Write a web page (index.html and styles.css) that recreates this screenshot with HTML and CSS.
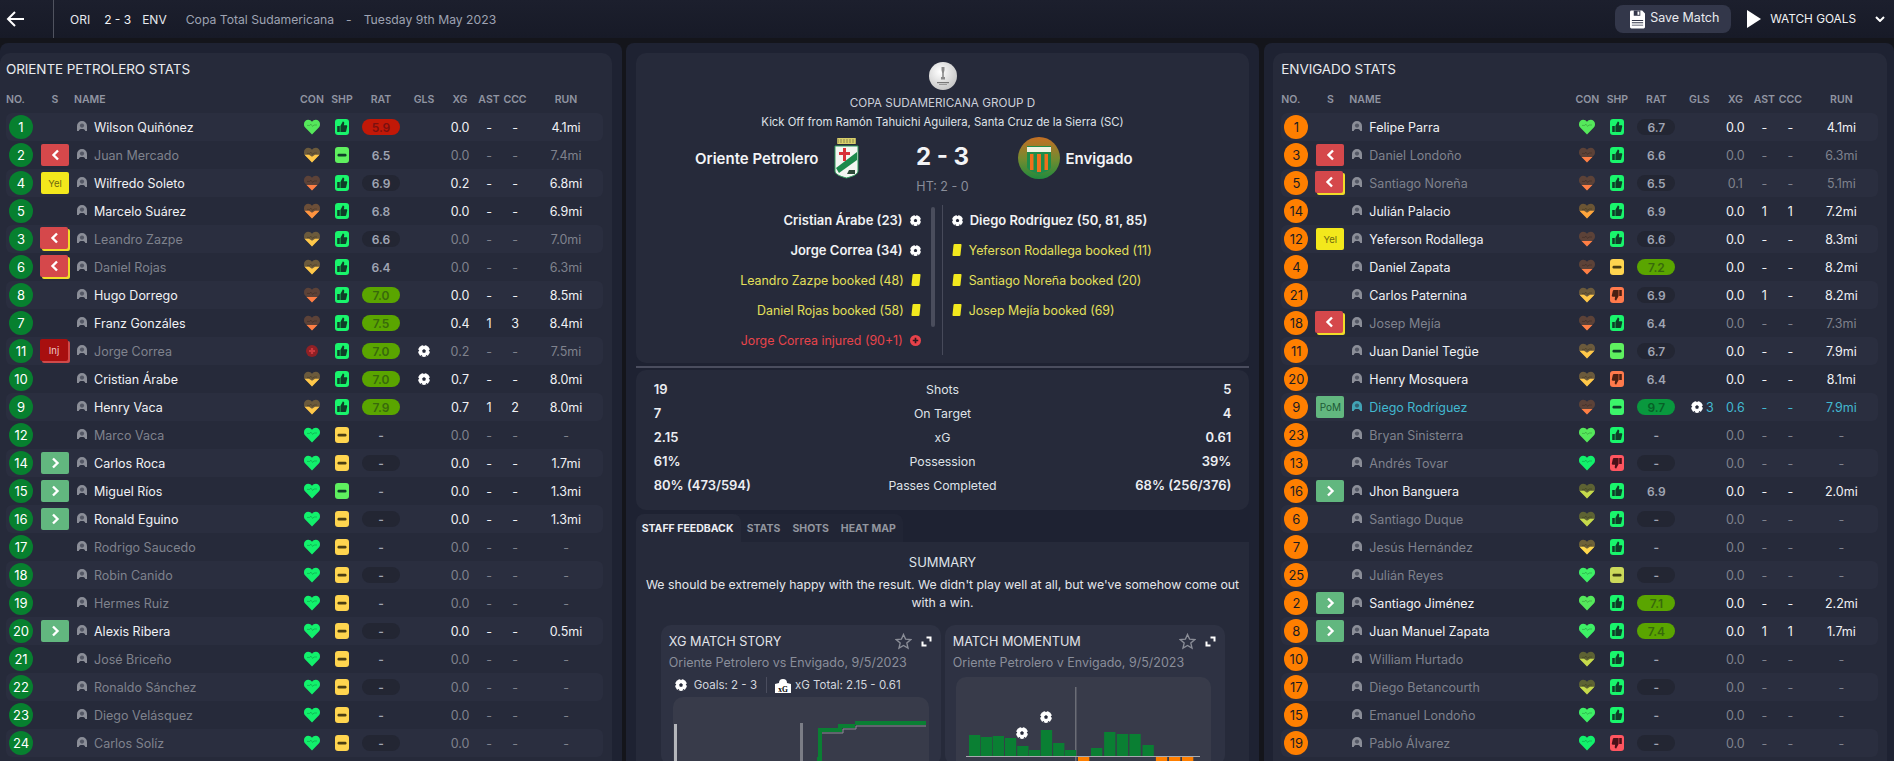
FILE: index.html
```html
<!DOCTYPE html>
<html lang="en">
<head>
<meta charset="utf-8">
<title>Match stats</title>
<link rel="stylesheet" href="styles.css">
</head>
<body>
<svg class="sprite" aria-hidden="true">
<defs>
<clipPath id="cm"><path d="M0 7.800H5L8 9.800L11 7.800H16V16H0Z"/></clipPath>
<clipPath id="cl"><path d="M0 10H16V16H0Z"/></clipPath>
<symbol id="hf" viewBox="0 0 16 16"><path class="hb" d="M8 15.6L1.2 8.6C.2 7.5 0 6.6 0 5C0 2.4 2 .8 4.2 .8C5.8 .8 7.2 1.6 8 2.8C8.8 1.6 10.2 .8 11.8 .8C14 .8 16 2.4 16 5C16 6.6 15.8 7.5 14.8 8.6Z"/><path class="ecg" d="M3 6.4H5.6L7 5.2L8.6 7.4L10 6H13"/></symbol>
<symbol id="hm" viewBox="0 0 16 16"><path class="ht" d="M8 15.6L1.2 8.6C.2 7.5 0 6.6 0 5C0 2.4 2 .8 4.2 .8C5.8 .8 7.2 1.6 8 2.8C8.8 1.6 10.2 .8 11.8 .8C14 .8 16 2.4 16 5C16 6.6 15.8 7.5 14.8 8.6Z"/><path class="hb" clip-path="url(#cm)" d="M8 15.6L1.2 8.6C.2 7.5 0 6.6 0 5C0 2.4 2 .8 4.2 .8C5.8 .8 7.2 1.6 8 2.8C8.8 1.6 10.2 .8 11.8 .8C14 .8 16 2.4 16 5C16 6.6 15.8 7.5 14.8 8.6Z"/><path class="ecg" d="M3 6.4H5.6L7 5.2L8.6 7.4L10 6H13"/></symbol>
<symbol id="hl" viewBox="0 0 16 16"><path class="ht" d="M8 15.6L1.2 8.6C.2 7.5 0 6.6 0 5C0 2.4 2 .8 4.2 .8C5.8 .8 7.2 1.6 8 2.8C8.8 1.6 10.2 .8 11.8 .8C14 .8 16 2.4 16 5C16 6.6 15.8 7.5 14.8 8.6Z"/><path class="hb" clip-path="url(#cl)" d="M8 15.6L1.2 8.6C.2 7.5 0 6.6 0 5C0 2.4 2 .8 4.2 .8C5.8 .8 7.2 1.6 8 2.8C8.8 1.6 10.2 .8 11.8 .8C14 .8 16 2.4 16 5C16 6.6 15.8 7.5 14.8 8.6Z"/><path class="ecg" d="M3 6.4H5.6L7 5.2L8.6 7.4L10 6H13"/></symbol>
<symbol id="hi" viewBox="0 0 16 16"><circle cx="8" cy="8" r="6" fill="#8f2025"/><path d="M8 5V11M5 8H11" stroke="#c9383c" stroke-width="2.2"/></symbol>
<symbol id="tu" viewBox="0 0 14 16"><rect x="2.2" y="7" width="2.6" height="6" fill="currentColor"/><path fill="currentColor" d="M5.4 13V7L7.8 2.6C9 2.6 9.5 3.6 9.2 4.6L8.8 6.2H11.2C12 6.2 12.3 6.8 12.2 7.4L11.2 12C11.1 12.6 10.6 13 10 13Z"/></symbol>
<symbol id="td" viewBox="0 0 14 16"><g transform="rotate(180 7 8)"><rect x="2.2" y="7" width="2.6" height="6" fill="currentColor"/><path fill="currentColor" d="M5.4 13V7L7.8 2.6C9 2.6 9.5 3.6 9.2 4.6L8.8 6.2H11.2C12 6.2 12.3 6.8 12.2 7.4L11.2 12C11.1 12.6 10.6 13 10 13Z"/></g></symbol>
<symbol id="tm" viewBox="0 0 14 16"><rect x="2.5" y="6.8" width="9" height="2.6" rx="1.2" fill="currentColor"/></symbol>
<symbol id="u" viewBox="0 0 10 10"><path fill="currentColor" d="M0 10V5A5 5 0 0 1 10 5V10H8.2C8 8.6 7 8 5 8S2 8.6 1.8 10Z"/><circle cx="5" cy="4.6" r="2.1" fill="#262a3a" opacity=".55"/></symbol>
<symbol id="cl-l" viewBox="0 0 9 12"><path d="M7 1.5L2.5 6L7 10.5" fill="none" stroke="#fff" stroke-width="2.4"/></symbol>
<symbol id="cl-r" viewBox="0 0 9 12"><path d="M2 1.5L6.5 6L2 10.5" fill="none" stroke="#fff" stroke-width="2.4"/></symbol>
<symbol id="ball" viewBox="0 0 12 12"><circle cx="6" cy="6" r="6" fill="#fff"/><path fill="#262a3a" d="M6 4L7.900 5.400L7.200 7.700H4.800L4.100 5.400Z"/><path fill="#262a3a" d="M4.800 0H7.200L6 1.300ZM12 4.500L12 7L10.700 5.500ZM0 4.500V7L1.300 5.500ZM2.200 10.800L4.400 12L3.900 10ZM9.800 10.800L7.600 12L8.100 10Z"/></symbol>
<symbol id="plus" viewBox="0 0 12 12"><circle cx="6" cy="6" r="6" fill="#e8424a"/><path d="M6 3V9M3 6H9" stroke="#2b1a22" stroke-width="1.8"/></symbol>
</defs>
</svg>

<header class="topbar">
  <svg class="back" viewBox="0 0 18 18"><path d="M9 2L2 9L9 16M2 9H18" fill="none" stroke="#fff" stroke-width="2"/></svg>
  <div class="topinfo">
    <span class="abbr">ORI</span><span class="tscore">2 - 3</span><span class="abbr">ENV</span>
    <span class="comp first">Copa Total Sudamericana</span><span class="comp sep">-</span><span class="comp">Tuesday 9th May 2023</span>
  </div>
  <button class="save"><svg viewBox="0 0 16 19"><path fill="#fff" d="M1.5 0H13L16 3V17.5A1.5 1.5 0 0 1 14.5 19H1.5A1.5 1.5 0 0 1 0 17.5V1.5A1.5 1.5 0 0 1 1.500 0Z"/><path fill="#33374a" d="M4 0H11V5.500H4ZM2 10H14V11H2ZM2 12.500H14V13.500H2ZM2 15H14V16H2Z"/><rect x="8" y="1" width="2" height="3.500" fill="#fff"/></svg>Save Match</button>
  <svg class="play" viewBox="0 0 14 18"><path fill="#fff" d="M0 0L14 9L0 18Z"/></svg>
  <span class="watch">WATCH GOALS</span>
  <svg class="chev" viewBox="0 0 10 6"><path d="M1 1L5 5L9 1" fill="none" stroke="#fff" stroke-width="2"/></svg>
</header>

<main class="board">
<section class="panel panel-l">
<div class="card team">
<h2 class="ttl">ORIENTE PETROLERO STATS</h2>
<div class="cols"><span class="a-l">NO.</span><span>S</span><span class="a-l">NAME</span><span>CON</span><span>SHP</span><span>RAT</span><span>GLS</span><span>XG</span><span>AST</span><span>CCC</span><span>RUN</span></div>
<div class="rows hg">
<div class="row"><span class="no">1</span><i></i><span class="nm"><svg class="u"><use href="#u"/></svg>Wilson Quiñónez</span><svg class="h h-lg"><use href="#hf"/></svg><svg class="t up"><use href="#tu"/></svg><span class="pill red">5.9</span><i></i><span>0.0</span><span>-</span><span>-</span><span>4.1mi</span></div>
<div class="row dim"><span class="no">2</span><span class="b out"><svg><use href="#cl-l"/></svg></span><span class="nm"><svg class="u"><use href="#u"/></svg>Juan Mercado</span><svg class="h h-go"><use href="#hm"/></svg><svg class="t mg"><use href="#tm"/></svg><span class="pill">6.5</span><i></i><span>0.0</span><span>-</span><span>-</span><span>7.4mi</span></div>
<div class="row"><span class="no">4</span><span class="b yel">Yel</span><span class="nm"><svg class="u"><use href="#u"/></svg>Wilfredo Soleto</span><svg class="h h-bn"><use href="#hl"/></svg><svg class="t up"><use href="#tu"/></svg><span class="pill">6.9</span><i></i><span>0.2</span><span>-</span><span>-</span><span>6.8mi</span></div>
<div class="row"><span class="no">5</span><i></i><span class="nm"><svg class="u"><use href="#u"/></svg>Marcelo Suárez</span><svg class="h h-or"><use href="#hm"/></svg><svg class="t up"><use href="#tu"/></svg><span class="pill">6.8</span><i></i><span>0.0</span><span>-</span><span>-</span><span>6.9mi</span></div>
<div class="row dim"><span class="no">3</span><span class="b out bk"><svg><use href="#cl-l"/></svg></span><span class="nm"><svg class="u"><use href="#u"/></svg>Leandro Zazpe</span><svg class="h h-go"><use href="#hm"/></svg><svg class="t up"><use href="#tu"/></svg><span class="pill">6.6</span><i></i><span>0.0</span><span>-</span><span>-</span><span>7.0mi</span></div>
<div class="row dim"><span class="no">6</span><span class="b out bk"><svg><use href="#cl-l"/></svg></span><span class="nm"><svg class="u"><use href="#u"/></svg>Daniel Rojas</span><svg class="h h-go"><use href="#hm"/></svg><svg class="t up"><use href="#tu"/></svg><span class="pill">6.4</span><i></i><span>0.0</span><span>-</span><span>-</span><span>6.3mi</span></div>
<div class="row"><span class="no">8</span><i></i><span class="nm"><svg class="u"><use href="#u"/></svg>Hugo Dorrego</span><svg class="h h-bn"><use href="#hl"/></svg><svg class="t up"><use href="#tu"/></svg><span class="pill lime">7.0</span><i></i><span>0.0</span><span>-</span><span>-</span><span>8.5mi</span></div>
<div class="row"><span class="no">7</span><i></i><span class="nm"><svg class="u"><use href="#u"/></svg>Franz Gonzáles</span><svg class="h h-bn"><use href="#hl"/></svg><svg class="t up"><use href="#tu"/></svg><span class="pill lime">7.5</span><i></i><span>0.4</span><span>1</span><span>3</span><span>8.4mi</span></div>
<div class="row dim"><span class="no">11</span><span class="b inj">Inj</span><span class="nm"><svg class="u"><use href="#u"/></svg>Jorge Correa</span><svg class="h"><use href="#hi"/></svg><svg class="t up"><use href="#tu"/></svg><span class="pill lime">7.0</span><svg class="gb"><use href="#ball"/></svg><span>0.2</span><span>-</span><span>-</span><span>7.5mi</span></div>
<div class="row"><span class="no">10</span><i></i><span class="nm"><svg class="u"><use href="#u"/></svg>Cristian Árabe</span><svg class="h h-go"><use href="#hm"/></svg><svg class="t up"><use href="#tu"/></svg><span class="pill lime">7.0</span><svg class="gb"><use href="#ball"/></svg><span>0.7</span><span>-</span><span>-</span><span>8.0mi</span></div>
<div class="row"><span class="no">9</span><i></i><span class="nm"><svg class="u"><use href="#u"/></svg>Henry Vaca</span><svg class="h h-go"><use href="#hm"/></svg><svg class="t up"><use href="#tu"/></svg><span class="pill lime">7.9</span><i></i><span>0.7</span><span>1</span><span>2</span><span>8.0mi</span></div>
<div class="row dim"><span class="no">12</span><i></i><span class="nm"><svg class="u"><use href="#u"/></svg>Marco Vaca</span><svg class="h h-br"><use href="#hf"/></svg><svg class="t my"><use href="#tm"/></svg><span class="pill">-</span><i></i><span>0.0</span><span>-</span><span>-</span><span>-</span></div>
<div class="row"><span class="no">14</span><span class="b in"><svg><use href="#cl-r"/></svg></span><span class="nm"><svg class="u"><use href="#u"/></svg>Carlos Roca</span><svg class="h h-br"><use href="#hf"/></svg><svg class="t my"><use href="#tm"/></svg><span class="pill">-</span><i></i><span>0.0</span><span>-</span><span>-</span><span>1.7mi</span></div>
<div class="row"><span class="no">15</span><span class="b in"><svg><use href="#cl-r"/></svg></span><span class="nm"><svg class="u"><use href="#u"/></svg>Miguel Ríos</span><svg class="h h-br"><use href="#hf"/></svg><svg class="t mg"><use href="#tm"/></svg><span class="pill">-</span><i></i><span>0.0</span><span>-</span><span>-</span><span>1.3mi</span></div>
<div class="row"><span class="no">16</span><span class="b in"><svg><use href="#cl-r"/></svg></span><span class="nm"><svg class="u"><use href="#u"/></svg>Ronald Eguino</span><svg class="h h-br"><use href="#hf"/></svg><svg class="t my"><use href="#tm"/></svg><span class="pill">-</span><i></i><span>0.0</span><span>-</span><span>-</span><span>1.3mi</span></div>
<div class="row dim"><span class="no">17</span><i></i><span class="nm"><svg class="u"><use href="#u"/></svg>Rodrigo Saucedo</span><svg class="h h-br"><use href="#hf"/></svg><svg class="t my"><use href="#tm"/></svg><span class="pill">-</span><i></i><span>0.0</span><span>-</span><span>-</span><span>-</span></div>
<div class="row dim"><span class="no">18</span><i></i><span class="nm"><svg class="u"><use href="#u"/></svg>Robin Canido</span><svg class="h h-br"><use href="#hf"/></svg><svg class="t my"><use href="#tm"/></svg><span class="pill">-</span><i></i><span>0.0</span><span>-</span><span>-</span><span>-</span></div>
<div class="row dim"><span class="no">19</span><i></i><span class="nm"><svg class="u"><use href="#u"/></svg>Hermes Ruiz</span><svg class="h h-br"><use href="#hf"/></svg><svg class="t my"><use href="#tm"/></svg><span class="pill">-</span><i></i><span>0.0</span><span>-</span><span>-</span><span>-</span></div>
<div class="row"><span class="no">20</span><span class="b in"><svg><use href="#cl-r"/></svg></span><span class="nm"><svg class="u"><use href="#u"/></svg>Alexis Ribera</span><svg class="h h-br"><use href="#hf"/></svg><svg class="t my"><use href="#tm"/></svg><span class="pill">-</span><i></i><span>0.0</span><span>-</span><span>-</span><span>0.5mi</span></div>
<div class="row dim"><span class="no">21</span><i></i><span class="nm"><svg class="u"><use href="#u"/></svg>José Briceño</span><svg class="h h-br"><use href="#hf"/></svg><svg class="t my"><use href="#tm"/></svg><span class="pill">-</span><i></i><span>0.0</span><span>-</span><span>-</span><span>-</span></div>
<div class="row dim"><span class="no">22</span><i></i><span class="nm"><svg class="u"><use href="#u"/></svg>Ronaldo Sánchez</span><svg class="h h-br"><use href="#hf"/></svg><svg class="t my"><use href="#tm"/></svg><span class="pill">-</span><i></i><span>0.0</span><span>-</span><span>-</span><span>-</span></div>
<div class="row dim"><span class="no">23</span><i></i><span class="nm"><svg class="u"><use href="#u"/></svg>Diego Velásquez</span><svg class="h h-br"><use href="#hf"/></svg><svg class="t my"><use href="#tm"/></svg><span class="pill">-</span><i></i><span>0.0</span><span>-</span><span>-</span><span>-</span></div>
<div class="row dim"><span class="no">24</span><i></i><span class="nm"><svg class="u"><use href="#u"/></svg>Carlos Solíz</span><svg class="h h-br"><use href="#hf"/></svg><svg class="t my"><use href="#tm"/></svg><span class="pill">-</span><i></i><span>0.0</span><span>-</span><span>-</span><span>-</span></div>
</div>
</div>
</section>

<section class="panel panel-m">
<div class="card head">
  <svg class="cup" viewBox="0 0 28 28"><defs><radialGradient id="cg" cx=".4" cy=".35" r=".7"><stop offset="0" stop-color="#fff"/><stop offset="1" stop-color="#c4c4c4"/></radialGradient></defs><circle cx="14" cy="14" r="14" fill="url(#cg)"/><path fill="#8a8a8a" d="M12.500 5H15.500V8L14.800 11V15H16V17.500H12V15H13.200V11L12.500 8Z"/><rect x="8" y="20" width="12" height="1.200" fill="#777"/><rect x="10" y="22" width="8" height="1" fill="#999"/></svg>
  <div class="lg">COPA SUDAMERICANA GROUP D</div>
  <div class="ko">Kick Off from Ramón Tahuichi Aguilera, Santa Cruz de la Sierra (SC)</div>
  <div class="teams">
    <div class="tl"><span>Oriente Petrolero</span>
      <svg class="crest" viewBox="0 0 25 41"><rect x="3" y="0" width="19" height="6" rx="1" fill="#d8cf6a"/><path d="M3 2H22M3 4H22" stroke="#8a8550" stroke-dasharray="2 1"/><path d="M1 8H24V33C24 36 20 38 12.500 40C5 38 1 36 1 33Z" fill="#f4f6f2" stroke="#2f9a5a"/><path d="M2 30L23 14V22L5 35Z" fill="#1d8a4c"/><path d="M9 10V14H5V17H9V23H12V17H16V14H12V10Z" fill="#d8323a"/><path d="M15 32H21V36H13Z" fill="#2c4a38"/></svg>
    </div>
    <div class="fs">2 - 3</div>
    <div class="tr">
      <svg class="crest2" viewBox="0 0 42 42"><defs><linearGradient id="eg" x1="0" y1="0" x2="0" y2="1"><stop offset="0" stop-color="#c56f24"/><stop offset=".55" stop-color="#6f8b30"/><stop offset="1" stop-color="#1f8a3e"/></linearGradient></defs><circle cx="21" cy="21" r="21" fill="url(#eg)"/><path d="M9 9H33V30C33 33 27 35 21 37C15 35 9 33 9 30Z" fill="#1f8c4a"/><rect x="9" y="10" width="24" height="5" fill="#eef2e2"/><path d="M12 17H15.500V33H12ZM19 17H23V35H19ZM26.500 17H30V33H26.500Z" fill="#f0701c"/></svg>
      <span>Envigado</span></div>
  </div>
  <div class="ht">HT: 2 - 0</div>
  <div class="events">
    <div class="ev-l">
      <ul class="evs">
        <li class="gl">Cristian Árabe (23)<svg class="ei"><use href="#ball"/></svg></li>
        <li class="gl">Jorge Correa (34)<svg class="ei"><use href="#ball"/></svg></li>
        <li class="bk-t">Leandro Zazpe booked (48)<span class="yc"></span></li>
        <li class="bk-t">Daniel Rojas booked (58)<span class="yc"></span></li>
        <li class="in-t">Jorge Correa injured (90+1)<svg class="ei"><use href="#plus"/></svg></li>
      </ul>
      <span class="sbar"></span>
    </div>
    <ul class="evs ev-r">
      <li class="gl"><svg class="ei"><use href="#ball"/></svg>Diego Rodríguez (50, 81, 85)</li>
      <li class="bk-t"><span class="yc"></span>Yeferson Rodallega booked (11)</li>
      <li class="bk-t"><span class="yc"></span>Santiago Noreña booked (20)</li>
      <li class="bk-t"><span class="yc"></span>Josep Mejía booked (69)</li>
    </ul>
  </div>
</div>
<div class="rule"></div>
<div class="card stats">
  <div class="st"><b>19</b><span>Shots</span><b>5</b></div>
  <div class="st"><b>7</b><span>On Target</span><b>4</b></div>
  <div class="st"><b>2.15</b><span>xG</span><b>0.61</b></div>
  <div class="st"><b>61%</b><span>Possession</span><b>39%</b></div>
  <div class="st"><b>80% (473/594)</b><span>Passes Completed</span><b>68% (256/376)</b></div>
</div>
<nav class="tabs"><span class="tab on">STAFF FEEDBACK</span><span class="tab">STATS</span><span class="tab">SHOTS</span><span class="tab">HEAT MAP</span></nav>
<div class="feedback">
  <div class="sum">SUMMARY</div>
  <p class="sumt">We should be extremely happy with the result. We didn't play well at all, but we've somehow come out with a win.</p>
  <div class="widgets">
    <article class="wg">
      <div class="wh"><h3>XG MATCH STORY</h3><svg class="star" viewBox="0 0 18 18"><path d="M9 1.500L11.200 6.500L16.700 7L12.500 10.600L13.800 16L9 13.200L4.200 16L5.500 10.600L1.300 7L6.800 6.500Z" fill="none" stroke="#8a8d97" stroke-width="1.400"/></svg><svg class="exp" viewBox="0 0 11 11"><path d="M5.500 1.500H9.500V5.500M5.500 9.500H1.500V5.500" fill="none" stroke="#fff" stroke-width="2"/></svg></div>
      <div class="ws">Oriente Petrolero vs Envigado, 9/5/2023</div>
      <div class="meta"><svg class="mb"><use href="#ball"/></svg><span>Goals: 2 - 3</span><i class="vs"></i><svg class="xg" viewBox="0 0 16 16"><path fill="#fff" d="M0 16V7L4 6A4 4 0 0 1 12 6L16 7V16Z"/><text x="8" y="14.500" text-anchor="middle" class="xgt">xG</text></svg><span>xG Total: 2.15 - 0.61</span></div>
      <svg class="ch ch-l" viewBox="0 0 256 70"><rect x="1" y="27" width="3" height="43" fill="#b4b6bb"/><rect x="127" y="26" width="3" height="44" fill="#7b7d86"/><path d="M149 36H170V32H183V29H253" fill="none" stroke="#8b8d92"/><g fill="#0a7f33"><rect x="145" y="31" width="24" height="4"/><rect x="165" y="27" width="17" height="4"/><rect x="182" y="24" width="71" height="4"/><rect x="145" y="31" width="4" height="39"/><rect x="144" y="60" width="4" height="10"/></g></svg>
    </article>
    <article class="wg">
      <div class="wh"><h3>MATCH MOMENTUM</h3><svg class="star" viewBox="0 0 18 18"><path d="M9 1.500L11.200 6.500L16.700 7L12.500 10.600L13.800 16L9 13.200L4.200 16L5.500 10.600L1.300 7L6.800 6.500Z" fill="none" stroke="#8a8d97" stroke-width="1.400"/></svg><svg class="exp" viewBox="0 0 11 11"><path d="M5.500 1.500H9.500V5.500M5.500 9.500H1.500V5.500" fill="none" stroke="#fff" stroke-width="2"/></svg></div>
      <div class="ws">Oriente Petrolero v Envigado, 9/5/2023</div>
      <svg class="ch ch-r" viewBox="0 0 255 90">
        <rect x="119" y="10" width="1.500" height="80" fill="#6b6d76"/>
        <g fill="#0a7f33"><rect x="13" y="58" width="11.300" height="21"/><rect x="24.800" y="60" width="11.300" height="19"/><rect x="36.700" y="59" width="11.300" height="20"/><rect x="48.900" y="61" width="11.300" height="18"/><rect x="61.200" y="69" width="11.300" height="10"/><rect x="73" y="73" width="11.300" height="6"/><rect x="84.800" y="53" width="11.300" height="26"/><rect x="97.100" y="66" width="11.300" height="13"/><rect x="108.900" y="73" width="11.300" height="6"/><rect x="135" y="71" width="11.300" height="8"/><rect x="148.100" y="55" width="11.300" height="24"/><rect x="160.800" y="57" width="11.300" height="22"/><rect x="173.400" y="57" width="11.300" height="22"/><rect x="186.500" y="68" width="11.300" height="11"/></g>
        <g fill="#ff7f00"><rect x="122" y="80" width="11.300" height="10"/><rect x="199.900" y="80" width="11.300" height="10"/><rect x="213" y="80" width="11.300" height="10"/><rect x="226" y="80" width="11.300" height="10"/></g>
        <rect x="10" y="79" width="234" height="1" fill="#a8aab0"/>
        <use href="#ball" x="60" y="50" width="12" height="12"/><use href="#ball" x="84" y="34" width="12" height="12"/>
      </svg>
    </article>
  </div>
</div>
</section>

<section class="panel panel-r">
<div class="card team">
<h2 class="ttl">ENVIGADO STATS</h2>
<div class="cols"><span class="a-l">NO.</span><span>S</span><span class="a-l">NAME</span><span>CON</span><span>SHP</span><span>RAT</span><span>GLS</span><span>XG</span><span>AST</span><span>CCC</span><span>RUN</span></div>
<div class="rows ho">
<div class="row"><span class="no">1</span><i></i><span class="nm"><svg class="u"><use href="#u"/></svg>Felipe Parra</span><svg class="h h-lg"><use href="#hf"/></svg><svg class="t up"><use href="#tu"/></svg><span class="pill">6.7</span><i></i><span>0.0</span><span>-</span><span>-</span><span>4.1mi</span></div>
<div class="row dim"><span class="no">3</span><span class="b out"><svg><use href="#cl-l"/></svg></span><span class="nm"><svg class="u"><use href="#u"/></svg>Daniel Londoño</span><svg class="h h-bn"><use href="#hl"/></svg><svg class="t up"><use href="#tu"/></svg><span class="pill">6.6</span><i></i><span>0.0</span><span>-</span><span>-</span><span>6.3mi</span></div>
<div class="row dim"><span class="no">5</span><span class="b out bk"><svg><use href="#cl-l"/></svg></span><span class="nm"><svg class="u"><use href="#u"/></svg>Santiago Noreña</span><svg class="h h-bn"><use href="#hl"/></svg><svg class="t up"><use href="#tu"/></svg><span class="pill">6.5</span><i></i><span>0.1</span><span>-</span><span>-</span><span>5.1mi</span></div>
<div class="row"><span class="no">14</span><i></i><span class="nm"><svg class="u"><use href="#u"/></svg>Julián Palacio</span><svg class="h h-ap"><use href="#hm"/></svg><svg class="t up"><use href="#tu"/></svg><span class="pill">6.9</span><i></i><span>0.0</span><span>1</span><span>1</span><span>7.2mi</span></div>
<div class="row"><span class="no">12</span><span class="b yel">Yel</span><span class="nm"><svg class="u"><use href="#u"/></svg>Yeferson Rodallega</span><svg class="h h-bn"><use href="#hl"/></svg><svg class="t up"><use href="#tu"/></svg><span class="pill">6.6</span><i></i><span>0.0</span><span>-</span><span>-</span><span>8.3mi</span></div>
<div class="row"><span class="no">4</span><i></i><span class="nm"><svg class="u"><use href="#u"/></svg>Daniel Zapata</span><svg class="h h-bn"><use href="#hl"/></svg><svg class="t my"><use href="#tm"/></svg><span class="pill lime">7.2</span><i></i><span>0.0</span><span>-</span><span>-</span><span>8.2mi</span></div>
<div class="row"><span class="no">21</span><i></i><span class="nm"><svg class="u"><use href="#u"/></svg>Carlos Paternina</span><svg class="h h-go"><use href="#hm"/></svg><svg class="t dn"><use href="#td"/></svg><span class="pill">6.9</span><i></i><span>0.0</span><span>1</span><span>-</span><span>8.2mi</span></div>
<div class="row dim"><span class="no">18</span><span class="b out bk"><svg><use href="#cl-l"/></svg></span><span class="nm"><svg class="u"><use href="#u"/></svg>Josep Mejía</span><svg class="h h-bn"><use href="#hl"/></svg><svg class="t up"><use href="#tu"/></svg><span class="pill">6.4</span><i></i><span>0.0</span><span>-</span><span>-</span><span>7.3mi</span></div>
<div class="row"><span class="no">11</span><i></i><span class="nm"><svg class="u"><use href="#u"/></svg>Juan Daniel Tegüe</span><svg class="h h-go"><use href="#hm"/></svg><svg class="t mg"><use href="#tm"/></svg><span class="pill">6.7</span><i></i><span>0.0</span><span>-</span><span>-</span><span>7.9mi</span></div>
<div class="row"><span class="no">20</span><i></i><span class="nm"><svg class="u"><use href="#u"/></svg>Henry Mosquera</span><svg class="h h-go"><use href="#hm"/></svg><svg class="t dn"><use href="#td"/></svg><span class="pill">6.4</span><i></i><span>0.0</span><span>-</span><span>-</span><span>8.1mi</span></div>
<div class="row pom"><span class="no">9</span><span class="b pm">PoM</span><span class="nm"><svg class="u"><use href="#u"/></svg>Diego Rodríguez</span><svg class="h h-bn"><use href="#hl"/></svg><svg class="t mb2"><use href="#tm"/></svg><span class="pill grn">9.7</span><span class="gn"><svg class="gb"><use href="#ball"/></svg>3</span><span>0.6</span><span>-</span><span>-</span><span>7.9mi</span></div>
<div class="row dim"><span class="no">23</span><i></i><span class="nm"><svg class="u"><use href="#u"/></svg>Bryan Sinisterra</span><svg class="h h-lg"><use href="#hf"/></svg><svg class="t up"><use href="#tu"/></svg><span class="pill">-</span><i></i><span>0.0</span><span>-</span><span>-</span><span>-</span></div>
<div class="row dim"><span class="no">13</span><i></i><span class="nm"><svg class="u"><use href="#u"/></svg>Andrés Tovar</span><svg class="h h-br"><use href="#hf"/></svg><svg class="t dr"><use href="#td"/></svg><span class="pill">-</span><i></i><span>0.0</span><span>-</span><span>-</span><span>-</span></div>
<div class="row"><span class="no">16</span><span class="b in"><svg><use href="#cl-r"/></svg></span><span class="nm"><svg class="u"><use href="#u"/></svg>Jhon Banguera</span><svg class="h h-li"><use href="#hm"/></svg><svg class="t up"><use href="#tu"/></svg><span class="pill">6.9</span><i></i><span>0.0</span><span>-</span><span>-</span><span>2.0mi</span></div>
<div class="row dim"><span class="no">6</span><i></i><span class="nm"><svg class="u"><use href="#u"/></svg>Santiago Duque</span><svg class="h h-li"><use href="#hm"/></svg><svg class="t up"><use href="#tu"/></svg><span class="pill">-</span><i></i><span>0.0</span><span>-</span><span>-</span><span>-</span></div>
<div class="row dim"><span class="no">7</span><i></i><span class="nm"><svg class="u"><use href="#u"/></svg>Jesús Hernández</span><svg class="h h-ye"><use href="#hm"/></svg><svg class="t up"><use href="#tu"/></svg><span class="pill">-</span><i></i><span>0.0</span><span>-</span><span>-</span><span>-</span></div>
<div class="row dim"><span class="no">25</span><i></i><span class="nm"><svg class="u"><use href="#u"/></svg>Julián Reyes</span><svg class="h h-lg2"><use href="#hf"/></svg><svg class="t ml"><use href="#tm"/></svg><span class="pill">-</span><i></i><span>0.0</span><span>-</span><span>-</span><span>-</span></div>
<div class="row"><span class="no">2</span><span class="b in"><svg><use href="#cl-r"/></svg></span><span class="nm"><svg class="u"><use href="#u"/></svg>Santiago Jiménez</span><svg class="h h-lg"><use href="#hf"/></svg><svg class="t up"><use href="#tu"/></svg><span class="pill lime">7.1</span><i></i><span>0.0</span><span>-</span><span>-</span><span>2.2mi</span></div>
<div class="row"><span class="no">8</span><span class="b in"><svg><use href="#cl-r"/></svg></span><span class="nm"><svg class="u"><use href="#u"/></svg>Juan Manuel Zapata</span><svg class="h h-lg2"><use href="#hf"/></svg><svg class="t up"><use href="#tu"/></svg><span class="pill lime">7.4</span><i></i><span>0.0</span><span>1</span><span>1</span><span>1.7mi</span></div>
<div class="row dim"><span class="no">10</span><i></i><span class="nm"><svg class="u"><use href="#u"/></svg>William Hurtado</span><svg class="h h-li"><use href="#hm"/></svg><svg class="t up"><use href="#tu"/></svg><span class="pill">-</span><i></i><span>0.0</span><span>-</span><span>-</span><span>-</span></div>
<div class="row dim"><span class="no">17</span><i></i><span class="nm"><svg class="u"><use href="#u"/></svg>Diego Betancourth</span><svg class="h h-li"><use href="#hm"/></svg><svg class="t up"><use href="#tu"/></svg><span class="pill">-</span><i></i><span>0.0</span><span>-</span><span>-</span><span>-</span></div>
<div class="row dim"><span class="no">15</span><i></i><span class="nm"><svg class="u"><use href="#u"/></svg>Emanuel Londoño</span><svg class="h h-lg2"><use href="#hf"/></svg><svg class="t up"><use href="#tu"/></svg><span class="pill">-</span><i></i><span>0.0</span><span>-</span><span>-</span><span>-</span></div>
<div class="row dim"><span class="no">19</span><i></i><span class="nm"><svg class="u"><use href="#u"/></svg>Pablo Álvarez</span><svg class="h h-br"><use href="#hf"/></svg><svg class="t dr"><use href="#td"/></svg><span class="pill">-</span><i></i><span>0.0</span><span>-</span><span>-</span><span>-</span></div>
</div>
</div>
</section>
</main>
</body>
</html>
```
FILE: styles.css
```css
* { box-sizing: border-box; }
html, body { margin: 0; height: 100%; }
body {
  height: 761px; overflow: hidden; background: #14151b; color: #e9eaee;
  font-family: Inter, "Noto Sans", sans-serif; font-size: 12.5px;
}
.sprite { display: block; width: 0; height: 0; overflow: hidden; }
ul { list-style: none; margin: 0; padding: 0; }
i { font-style: normal; }

/* top bar */
.topbar { height: 38px; display: flex; align-items: center; background: linear-gradient(#1c1f2d, #171a27); }
.back { width: 18px; height: 18px; margin-left: 6px; }
.topinfo { display: flex; align-items: center; height: 38px; margin-left: 29px; padding-left: 16px; border-left: 1px solid #50535f; flex: 1; }
.abbr { color: #e6e8ee; font-size: 12px; }
.tscore { color: #f4f5f7; font-size: 12px; margin: 0 11px 0 14px; }
.comp { color: #9ea3b2; font-size: 12.2px; }
.first { margin-left: 19px; }
.sep { margin: 0 12px; }
.save { width: 116px; height: 28px; margin-right: 16px; border: 0; border-radius: 8px; background: #33374a; color: #e9eaee; display: flex; align-items: center; padding: 0 0 4px 15px; gap: 5px; font: 12.5px Inter, sans-serif; }
.save svg { width: 15px; height: 19px; margin-top: 4px; }
.play { width: 14px; height: 18px; margin-right: 9px; }
.watch { font-size: 11.8px; color: #f1f2f4; margin-right: 19px; white-space: nowrap; }
.chev { width: 10px; height: 6px; margin-right: 9px; }

/* panels */
.board { display: flex; gap: 4px; margin-top: 5px; height: 718px; }
.panel { background: #1e2232; padding-top: 10px; overflow: hidden; border-radius: 8px 8px 0 0; }
.panel-l { width: 622px; }
.panel-m { width: 634px; padding-left: 10px; padding-right: 10px; }
.panel-r { width: 630px; padding-left: 9px; margin-left: 1px; }
.card { background: #262a3a; border-radius: 10px; }
.team { width: 612px; padding: 6px 0 20px 6px; height: 720px; }
.panel-r .team { width: 614px; padding-left: 8px; }
.ttl { margin: 0; font-size: 13.5px; font-weight: 400; line-height: 20px; color: #e9eaee; letter-spacing: -.1px; }

/* table */
.cols, .row { display: grid; width: 597px; grid-template-columns: 30px 38px 223px 30px 30px 48px 38px 34px 24px 28px 74px; align-items: center; justify-items: center; }
.cols { height: 19px; margin: 11px 0 4px; font-size: 10.5px; font-weight: 600; color: #9195a2; }
.cols .a-l { justify-self: start; }
.row { height: 28px; font-size: 12.5px; color: #f0f1f4; border-radius: 6px; }
.row:nth-child(odd) { background: #2a2e3f; }
.dim { color: #7f828d; }
.pom { color: #42b8d0; }
.no { width: 24px; height: 24px; border-radius: 50%; display: flex; align-items: center; justify-content: center; font-size: 13px; }
.hg .no { background: #07802f; color: #fff; }
.ho .no { background: #ff7f00; color: #1c1c22; }
.b { width: 28px; height: 22px; border-radius: 2px; display: flex; align-items: center; justify-content: center; font-size: 9.5px; }
.b svg { width: 9px; height: 12px; }
.out { background: #d5484b; }
.in { background: #62b77f; }
.bk { box-shadow: 2px 2px 0 #f0dc28; transform: translate(-1px, -1px); }
.yel { background: #f3e81c; color: #6f6a10; }
.inj { background: #a80f0f; color: #f0c8c8; box-shadow: 2px 2px 0 #cf4a4a; transform: translate(-1px, -1px); }
.pm { background: #62b77f; color: #1d5a35; font-size: 10px; }
.nm { justify-self: start; display: flex; align-items: center; gap: 7px; padding-left: 3px; white-space: nowrap; }
.u { width: 10px; height: 10px; color: #8b8e98; margin-top: -2px; }
.pom .u { color: #42a3b5; }
.h { width: 16px; height: 16px; }
.hb { fill: var(--b); }
.ht { fill: var(--t); }
.ecg { fill: none; stroke: rgba(0, 0, 0, .35); stroke-width: .6; }
.h-lg { --b: #55e85b; }
.h-lg2 { --b: #3ef066; }
.h-br { --b: #12f06c; }
.h-go { --t: #6b5a3c; --b: #ffc84a; }
.h-or { --t: #6b4e38; --b: #ff9440; }
.h-bn { --t: #5c4238; --b: #ff7f45; }
.h-ap { --t: #6b5534; --b: #ffa63d; }
.h-li { --t: #5d6233; --b: #c6da4c; }
.h-ye { --t: #6d6138; --b: #ffd84d; }
.t { width: 14px; height: 16px; border-radius: 3px; color: #0f3d28; }
.up { background: #19f56c; }
.mb2 { background: #3cf56a; }
.mg { background: #5ff05f; }
.my { background: #ffd54f; color: #4a3d12; }
.ml { background: #cbd95a; color: #3b3d14; }
.dn { background: #ff7a4c; color: #4a2012; }
.dr { background: #ff5560; color: #4a1018; }
.pill { width: 38px; height: 16px; border-radius: 8px; display: flex; align-items: center; justify-content: center; font-size: 12px; font-weight: 600; color: #a0a5b3; }
.row:nth-child(odd) .pill { background: #232633; }
.row .pill.lime { background: #5aa500; color: #38690c; }
.row .pill.red { background: #c21807; color: #7a1010; }
.row .pill.grn { background: #09983e; color: #075f26; }
.gb { width: 12px; height: 12px; }
.gn { display: flex; align-items: center; gap: 3px; margin-left: 6px; }

/* middle */
.head { height: 310px; padding-top: 9px; display: flex; flex-direction: column; align-items: center; }
.cup { width: 28px; height: 28px; flex: none; }
.lg { line-height: 20px; margin-top: 3px; color: #ccd0da; font-size: 11.7px; }
.ko { line-height: 18px; color: #dfe2e8; font-size: 11.3px; }
.teams { display: grid; grid-template-columns: 1fr 90px 1fr; width: 100%; height: 42px; margin-top: 6px; align-items: center; font-size: 15px; font-weight: 600; color: #f3f4f6; }
.tl { display: flex; justify-content: flex-end; align-items: center; gap: 15px; padding-right: 39px; }
.tr { display: flex; align-items: center; gap: 6px; padding-left: 30px; }
.crest { width: 25px; height: 41px; }
.crest2 { width: 42px; height: 42px; }
.fs { text-align: center; font-size: 24px; font-weight: 700; margin-top: -4px; }
.ht { line-height: 16px; color: #8a8e9a; font-size: 12.5px; }
.events { display: grid; grid-template-columns: 306px 308px; width: 100%; margin-top: 10px; height: 150px; font-size: 12.4px; }
.ev-l { display: flex; justify-content: flex-end; padding-right: 7px; }
.evs li { height: 30px; display: flex; align-items: center; gap: 7px; white-space: nowrap; }
.ev-l .evs li { justify-content: flex-end; }
.ev-r { border-left: 1px solid #474a5a; padding-left: 9px; }
.gl { font-weight: 600; color: #f1f2f4; font-size: 13px; }
.bk-t { color: #e5e05a; }
.in-t { color: #e8444b; }
.ei { width: 11px; height: 11px; }
.yc { width: 8px; height: 12px; border-radius: 1px; background: #f2e81e; transform: skewX(-6deg); margin: 0 1px; }
.sbar { width: 4px; height: 120px; margin: 2px 0 0 10px; border-radius: 2px; background: #4a4d5c; }
.rule { height: 2px; margin: 3px 0 2px; background: #4a4d5e; }
.stats { height: 140px; padding: 7px 18px 0 18px; }
.st { display: grid; grid-template-columns: 1fr auto 1fr; height: 24px; align-items: center; font-size: 12.3px; color: #dfe2e8; }
.st b { font-weight: 600; color: #eceef2; font-size: 13px; }
.st b:last-child { text-align: right; }
.tabs { display: flex; height: 28px; margin-top: 4px; width: 267px; background: #212535; border-radius: 8px 8px 0 0; }
.tab { display: flex; align-items: center; padding: 0 6px; font-size: 10.5px; font-weight: 700; color: #92969f; white-space: nowrap; }
.tab.on { background: #262a3a; color: #eceef2; width: 105px; border-radius: 8px 8px 0 0; }
.feedback { background: #262a3a; height: 230px; padding-top: 11px; }
.sum { text-align: center; line-height: 18px; font-size: 13px; color: #dfe2e8; }
.sumt { margin: 5px 0 0; padding: 0 6px; text-align: center; line-height: 18px; font-size: 12.3px; color: #e4e6ea; }
.widgets { display: flex; gap: 4px; margin: 13px 0 0 25px; }
.wg { width: 280px; height: 140px; background: #2e3243; border-radius: 10px; padding-top: 7px; }
.wh { display: flex; align-items: center; height: 18px; padding: 0 9px 0 8px; }
.wh h3 { flex: 1; margin: 0; font-size: 12.7px; font-weight: 400; color: #e2e4ea; }
.star { width: 17px; height: 17px; margin-right: 9px; }
.exp { width: 11px; height: 11px; }
.ws { line-height: 18px; margin-top: 4px; padding-left: 8px; color: #8a8e9a; font-size: 12.5px; }
.meta { display: flex; align-items: center; height: 20px; margin-top: 3px; padding-left: 14px; font-size: 11.5px; color: #d3d6dd; }
.mb { width: 12px; height: 12px; margin-right: 7px; }
.vs { width: 1px; height: 16px; background: #4a4d5e; margin: 0 8px 0 9px; }
.xg { width: 16px; height: 16px; margin-right: 4px; }
.xgt { font: 700 7.5px "Liberation Serif", serif; fill: #000; }
.ch { display: block; background: #383b4a; border-radius: 10px 10px 0 0; }
.ch-l { width: 256px; height: 70px; margin: 2px 0 0 12px; }
.ch-r { width: 255px; height: 90px; margin: 5px 0 0 11px; }
```
